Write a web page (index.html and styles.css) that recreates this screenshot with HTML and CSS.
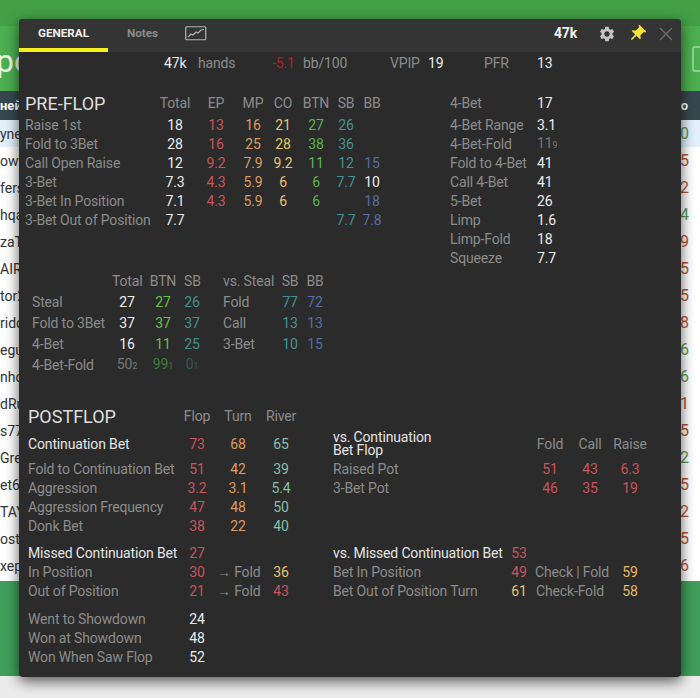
FILE: index.html
```html
<!DOCTYPE html>
<html lang="en">
<head>
    <meta charset="UTF-8">
    <title>Player stats</title>
    <link rel="stylesheet" href="styles.css">
</head>
<body>
    <div class="page">
        <div class="top-bar"></div>
        <div class="hero">
            <span class="hero-title">po</span>
            <span class="hero-btn"></span>
        </div>
        <div class="table-head"><span>ней</span><span>о</span></div>
        <div class="table-rows">
            <div class="player selected"><span>yne</span><span class="win">0</span></div>
            <div class="player"><span>owy</span><span class="loss">5</span></div>
            <div class="player"><span>fers</span><span class="loss">2</span></div>
            <div class="player"><span>hqa</span><span class="win">4</span></div>
            <div class="player"><span>zaT</span><span class="loss">9</span></div>
            <div class="player"><span>AIRU</span><span class="loss">5</span></div>
            <div class="player"><span>tor2</span><span class="loss">5</span></div>
            <div class="player"><span>rido</span><span class="loss">8</span></div>
            <div class="player"><span>egus</span><span class="win">6</span></div>
            <div class="player"><span>nho</span><span class="win">6</span></div>
            <div class="player"><span>dRu</span><span class="loss">1</span></div>
            <div class="player"><span>s77</span><span class="loss">5</span></div>
            <div class="player"><span>Gre</span><span class="win">2</span></div>
            <div class="player"><span>et68</span><span class="loss">5</span></div>
            <div class="player"><span>TAY</span><span class="loss">2</span></div>
            <div class="player"><span>osto</span><span class="loss">5</span></div>
            <div class="player"><span>xepa</span><span class="loss">6</span></div>
        </div>
        <div class="page-footer"></div>
    </div>

    <div class="panel">
        <div class="panel-head">
            <div class="tab active">GENERAL</div>
            <div class="tab">Notes</div>
            <svg class="chart-icon" width="22" height="15" viewBox="0 0 22 15">
                <rect x="0.75" y="0.75" width="20" height="13" rx="1" fill="none" stroke="#b4b4b4" stroke-width="1.2"/>
                <polyline points="3,11 6,8 8,9 11,6 13,7 16,4 19,3.500" fill="none" stroke="#b4b4b4" stroke-width="1.1"/>
            </svg>
            <div class="head-right">
                <span class="head-hands">47k</span>
                <svg class="gear" width="18" height="18" viewBox="0 0 24 24">
                    <path fill="#c4c4c4" d="M19.14 12.94c.04-.3.06-.61.06-.94 0-.32-.02-.64-.07-.94l2.03-1.58a.49.49 0 0 0 .12-.61l-1.92-3.32a.488.488 0 0 0-.59-.22l-2.39.96c-.5-.38-1.03-.7-1.62-.94l-.36-2.54a.484.484 0 0 0-.48-.41h-3.84c-.24 0-.43.17-.47.41l-.36 2.54c-.59.24-1.13.57-1.62.94l-2.39-.96c-.22-.08-.47 0-.59.22L2.74 8.87c-.12.21-.08.47.12.61l2.03 1.58c-.05.3-.09.63-.09.94s.02.64.07.94l-2.03 1.58a.49.49 0 0 0-.12.61l1.92 3.32c.12.22.37.29.59.22l2.39-.96c.5.38 1.03.7 1.62.94l.36 2.54c.05.24.24.41.48.41h3.84c.24 0 .44-.17.47-.41l.36-2.54c.59-.24 1.13-.56 1.62-.94l2.39.96c.22.08.47 0 .59-.22l1.92-3.32c.12-.22.07-.47-.12-.61l-2.01-1.58zM12 15.6c-1.98 0-3.6-1.62-3.6-3.6s1.62-3.6 3.6-3.6 3.6 1.62 3.6 3.6-1.62 3.6-3.6 3.6z"/>
                </svg>
                <svg class="pin" width="20" height="20" viewBox="0 0 24 24">
                    <path fill="#f2e23a" transform="rotate(45 12 12)" d="M16 9V4h1c.55 0 1-.45 1-1s-.45-1-1-1H7c-.55 0-1 .45-1 1s.45 1 1 1h1v5c0 1.66-1.34 3-3 3v2h5.97v7l1 1 1-1v-7H19v-2c-1.66 0-3-1.34-3-3z"/>
                </svg>
                <svg class="close" width="14" height="14" viewBox="0 0 14 14">
                    <path d="M1 1L13 13M13 1L1 13" stroke="#6f6f6f" stroke-width="1.2" fill="none"/>
                </svg>
            </div>
        </div>

        <div class="summary">
            <b class="val">47k</b><span>hands</span>
            <b class="dark-red">-5.1</b><span>bb/100</span>
            <span>VPIP</span><b class="val">19</b>
            <span>PFR</span><b class="val">13</b>
        </div>

        <div class="preflop">
            <div class="grid preflop-grid">
                <h2>PRE-FLOP</h2><span>Total</span><span>EP</span><span>MP</span><span>CO</span><span>BTN</span><span>SB</span><span>BB</span>
                <span>Raise 1st</span><b class="val">18</b><b class="red">13</b><b class="orange">16</b><b class="yellow">21</b><b class="green">27</b><b class="teal">26</b><b></b>
                <span>Fold to 3Bet</span><b class="val">28</b><b class="red">16</b><b class="orange">25</b><b class="yellow">28</b><b class="green">38</b><b class="teal">36</b><b></b>
                <span>Call Open Raise</span><b class="val">12</b><b class="red">9.2</b><b class="orange">7.9</b><b class="yellow">9.2</b><b class="green">11</b><b class="teal">12</b><b class="blue">15</b>
                <span>3-Bet</span><b class="val">7.3</b><b class="red">4.3</b><b class="orange">5.9</b><b class="yellow">6</b><b class="green">6</b><b class="teal">7.7</b><b class="val">10</b>
                <span>3-Bet In Position</span><b class="val">7.1</b><b class="red">4.3</b><b class="orange">5.9</b><b class="yellow">6</b><b class="green">6</b><b></b><b class="blue">18</b>
                <span>3-Bet Out of Position</span><b class="val">7.7</b><b></b><b></b><b></b><b></b><b class="teal">7.7</b><b class="blue">7.8</b>
            </div>
            <div class="grid side-grid">
                <span>4-Bet</span><b class="val">17</b>
                <span>4-Bet Range</span><b class="val">3.1</b>
                <span>4-Bet-Fold</span><b class="dim">11<small>9</small></b>
                <span>Fold to 4-Bet</span><b class="val">41</b>
                <span>Call 4-Bet</span><b class="val">41</b>
                <span>5-Bet</span><b class="val">26</b>
                <span>Limp</span><b class="val">1.6</b>
                <span>Limp-Fold</span><b class="val">18</b>
                <span>Squeeze</span><b class="val">7.7</b>
            </div>
        </div>

        <div class="grid steal-grid">
            <span></span><span>Total</span><span>BTN</span><span>SB</span><i></i><span>vs. Steal</span><span>SB</span><span>BB</span>
            <span>Steal</span><b class="val">27</b><b class="lime">27</b><b class="teal">26</b><i></i><span>Fold</span><b class="teal">77</b><b class="blue">72</b>
            <span>Fold to 3Bet</span><b class="val">37</b><b class="lime">37</b><b class="teal">37</b><i></i><span>Call</span><b class="teal">13</b><b class="blue">13</b>
            <span>4-Bet</span><b class="val">16</b><b class="lime">11</b><b class="teal">25</b><i></i><span>3-Bet</span><b class="teal">10</b><b class="blue">15</b>
            <span>4-Bet-Fold</span><b class="dim">50<small>2</small></b><b class="dim-green">99<small>1</small></b><b class="dim-teal">0<small>1</small></b><i></i><span></span><b></b><b></b>
        </div>

        <div class="postflop">
            <div class="post-left">
                <div class="grid post-grid post-title">
                    <h2>POSTFLOP</h2><span>Flop</span><span>Turn</span><span>River</span>
                </div>
                <div class="grid post-grid cbet">
                    <span class="strong">Continuation Bet</span><b class="red">73</b><b class="orange">68</b><b class="mint">65</b>
                </div>
                <div class="grid post-grid after-cbet">
                    <span>Fold to Continuation Bet</span><b class="red">51</b><b class="orange">42</b><b class="mint">39</b>
                    <span>Aggression</span><b class="red">3.2</b><b class="orange">3.1</b><b class="mint">5.4</b>
                    <span>Aggression Frequency</span><b class="red">47</b><b class="orange">48</b><b class="mint">50</b>
                    <span>Donk Bet</span><b class="red">38</b><b class="orange">22</b><b class="mint">40</b>
                </div>
                <div class="grid post-grid missed">
                    <span class="strong">Missed Continuation Bet</span><b class="red">27</b><b></b><b></b>
                    <span>In Position</span><b class="red">30</b><span>→ Fold</span><b class="yellow">36</b>
                    <span>Out of Position</span><b class="red">21</b><span>→ Fold</span><b class="red">43</b>
                </div>
                <div class="grid post-grid showdown">
                    <span>Went to Showdown</span><b class="val">24</b><b></b><b></b>
                    <span>Won at Showdown</span><b class="val">48</b><b></b><b></b>
                    <span>Won When Saw Flop</span><b class="val">52</b><b></b><b></b>
                </div>
            </div>
            <div class="post-right">
                <div class="grid vs-grid vs-head">
                    <span class="strong two-line">vs. Continuation<br>Bet Flop</span><span>Fold</span><span>Call</span><span>Raise</span>
                </div>
                <div class="grid vs-grid vs-rows">
                    <span>Raised Pot</span><b class="red">51</b><b class="red">43</b><b class="red">6.3</b>
                    <span>3-Bet Pot</span><b class="red">46</b><b class="red">35</b><b class="red">19</b>
                </div>
                <div class="grid vs-missed">
                    <span class="strong">vs. Missed Continuation Bet</span><b class="red">53</b><b></b><b></b>
                    <span>Bet In Position</span><b class="red">49</b><span>Check | Fold</span><b class="amber">59</b>
                    <span>Bet Out of Position Turn</span><b class="yellow">61</b><span>Check-Fold</span><b class="amber">58</b>
                </div>
            </div>
        </div>
    </div>
</body>
</html>
```

FILE: styles.css
```css
* {
    box-sizing: border-box;
}
body {
    margin: 0;
    height: 698px;
    overflow: hidden;
    background-color: #ececec;
    font-family: Roboto, "Liberation Sans", sans-serif;
}

/* page behind the popup */
.top-bar {
    height: 26px;
    background-color: #43a047;
}
.hero {
    height: 65px;
    background-color: #4caf50;
    display: flex;
    justify-content: space-between;
    align-items: center;
    overflow: hidden;
}
.hero-title {
    color: #eef8ee;
    font-size: 32px;
    margin-left: -4px;
    margin-top: 4px;
}
.hero-btn {
    width: 24px;
    height: 26px;
    margin-right: -16px;
    border: 2px solid #8fd093;
    border-radius: 3px;
}
.table-head {
    height: 29px;
    background-color: #37474f;
    color: #fff;
    font-size: 13px;
    font-weight: 700;
    display: flex;
    justify-content: space-between;
    align-items: center;
    padding: 0 12px 0 0;
}
.table-rows {
    background-color: #fff;
    height: 461px;
}
.player {
    height: 27px;
    display: flex;
    justify-content: space-between;
    align-items: center;
    padding: 0 11px 0 0;
    font-size: 16px;
    color: #333;
    white-space: nowrap;
}
.player span:first-child {
    font-size: 14px;
}
.selected {
    background-color: #e3f0fb;
}
.win {
    color: #5a9a50;
}
.loss {
    color: #b5533a;
}
.page-footer {
    height: 95px;
    background-color: #3f9f5a;
}

/* popup */
.panel {
    position: absolute;
    left: 19px;
    top: 19px;
    width: 662px;
    height: 658px;
    background-color: #2b2b2b;
    border-radius: 4px;
    box-shadow: 0 4px 14px rgba(0, 0, 0, 0.65);
    color: #8c8c8c;
    font-size: 14px;
    letter-spacing: -0.15px;
    line-height: 19px;
    overflow: hidden;
}
.panel-head {
    height: 33px;
    background-color: #343434;
    display: flex;
    align-items: center;
}
.tab {
    font-size: 11.7px;
    letter-spacing: 0;
    font-weight: 700;
    color: #8c8c8c;
    text-align: center;
    width: 89px;
    height: 33px;
    line-height: 29px;
}
.tab.active {
    color: #f2f2f2;
    border-bottom: 4px solid #f5f01e;
}
.tab + .tab {
    width: 69px;
}
.chart-icon {
    margin-left: 8px;
    margin-top: -4px;
}
.head-right {
    margin-left: auto;
    display: flex;
    align-items: center;
    height: 33px;
    padding-bottom: 4px;
}
.head-hands {
    color: #f2f2f2;
    font-weight: 700;
    font-size: 14px;
}
.gear {
    margin-left: 21px;
}
.pin {
    margin-left: 11px;
}
.close {
    margin-left: 12px;
    margin-right: 8px;
}

.panel b {
    font-weight: 400;
    text-align: center;
}
.panel small {
    font-size: 9px;
}
.val {
    color: #ececec;
}
.red {
    color: #c9545b;
}
.dark-red {
    color: #b8201f;
}
.orange {
    color: #dd9c5f;
}
.yellow {
    color: #e6c36e;
}
.amber {
    color: #e8b866;
}
.green {
    color: #5cb34e;
}
.lime {
    color: #66c24a;
}
.teal {
    color: #46918f;
}
.mint {
    color: #88bfa8;
}
.blue {
    color: #566da5;
}
.dim {
    color: #777;
}
.dim-green {
    color: #3f7a3a;
}
.dim-teal {
    color: #345a5a;
}
.strong {
    color: #e4e4e4;
}

.summary {
    display: grid;
    grid-template-columns: 34px 74px 31px 87px 38px 56px 53px auto;
    height: 20px;
    margin-top: 1px;
    padding-left: 145px;
    align-items: center;
    white-space: nowrap;
}
.panel .summary b {
    text-align: left;
}

.grid {
    display: grid;
    grid-auto-rows: 19px;
    align-items: center;
    white-space: nowrap;
}
.grid > span {
    text-align: center;
}
.grid > span:first-child,
.grid > h2 {
    text-align: left;
}
h2 {
    margin: 0;
    font-size: 18px;
    font-weight: 400;
    letter-spacing: 0;
    color: #dedede;
}

.preflop {
    display: flex;
    margin-top: 18px;
    padding-left: 6px;
}
.preflop-grid {
    grid-template-columns: 130px 40px 42px 32px 28px 38px 22px 30px;
    grid-template-rows: 25px;
    width: 362px;
}
.preflop-grid > span:nth-child(8n + 9) {
    text-align: left;
}
.side-grid {
    grid-template-columns: 87px 30px;
    grid-template-rows: 25px;
    margin-left: 63px;
}
.side-grid > span {
    text-align: left;
}
.panel .side-grid > b {
    text-align: left;
}

.steal-grid {
    grid-template-columns: 80px 30px 42px 16px 23px 55px 24px 26px;
    grid-template-rows: 21.5px;
    grid-auto-rows: 20.75px;
    margin: 3px 0 0 13px;
}
.steal-grid > span:nth-child(8n + 9) {
    text-align: left;
}
.steal-grid > span:nth-child(8n + 6) {
    text-align: left;
}

.postflop {
    display: flex;
    margin-top: 30.75px;
}
.post-left {
    width: 314px;
    padding-left: 9px;
}
.post-grid {
    grid-template-columns: 149px 40px 42px 44px;
}
.post-grid > span:nth-child(4n + 1) {
    text-align: left;
}
.post-title {
    grid-auto-rows: 20px;
}
.cbet {
    margin-top: 8px;
    grid-auto-rows: 20px;
}
.after-cbet {
    margin-top: 5.5px;
}
.missed {
    margin-top: 8.5px;
}
.showdown {
    margin-top: 8.5px;
}

.vs-grid {
    grid-template-columns: 197px 40px 40px 40px;
}
.vs-grid > span:nth-child(4n + 1) {
    text-align: left;
}
.vs-head {
    margin-top: 25px;
    grid-auto-rows: 26px;
}
.two-line {
    line-height: 13px;
}
.vs-rows {
    margin-top: 2.5px;
}
.vs-missed {
    grid-template-columns: 170px 32px 70px 50px;
    margin-top: 46.5px;
}
.vs-missed > span:nth-child(4n + 1) {
    text-align: left;
}
```
